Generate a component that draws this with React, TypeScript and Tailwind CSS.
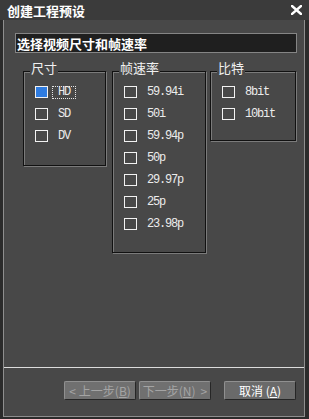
const cjk = "font-['Noto_Sans_CJK_SC','Noto_Sans',sans-serif]";
const mono = "font-['Liberation_Mono','Noto_Sans_CJK_SC',monospace]";

type Opt = { label: string; checked?: boolean; focus?: boolean };

const Check = ({ label, checked, focus }: Opt) => (
  <div className="flex items-center h-[12px]">
    <div
      className={`w-[13px] h-[12px] border border-[#f2f2f2] ${checked ? "bg-[#2f7ce0]" : ""}`}
    />
    <span
      className={`ml-[4px] px-[5px] h-[13px] flex items-center border border-dotted ${
        focus ? "border-[#e6e6e6]" : "border-transparent"
      } ${mono} text-[12px] tracking-[-1.2px] text-[#ececec]`}
    >
      {label}
    </span>
  </div>
);

const Group = ({
  title,
  width,
  height,
  items,
}: {
  title: string;
  width: string;
  height: string;
  items: Opt[];
}) => (
  <div
    className={`relative ${width} ${height} border border-[#111] shadow-[1px_1px_0_#7b7b7b,inset_1px_1px_0_#7b7b7b] pl-[11px] pt-[14px] flex flex-col gap-[10px]`}
  >
    <span
      className={`absolute left-[6px] -top-[12px] px-[1px] bg-[#484848] ${cjk} text-[13px] leading-[16px] text-[#f0f0f0]`}
    >
      {title}
    </span>
    {items.map((it) => (
      <Check key={it.label} {...it} />
    ))}
  </div>
);

const Btn = ({
  children,
  disabled,
  className = "",
}: {
  children: React.ReactNode;
  disabled?: boolean;
  className?: string;
}) => (
  <button
    className={`w-[72px] h-[19px] flex items-center justify-center rounded-[2px] border border-t-[#909090] border-l-[#909090] border-r-[#262626] border-b-[#262626] ${cjk} text-[12px] leading-none ${
      disabled ? "bg-[#707070] text-[#a4a4a4]" : "bg-[#6a6a6a] text-white"
    } ${className}`}
  >
    {children}
  </button>
);

export default function App() {
  return (
    <div className={`w-[309px] h-[419px] bg-[#2b2b2b] flex flex-col ${cjk}`}>
      <div className="h-[20px] shrink-0 bg-[#3b3b3b] flex items-center justify-between pl-[7px] pr-[7px]">
        <span className="text-[13px] font-bold leading-none text-white">创建工程预设</span>
        <svg width="11" height="10" viewBox="0 0 11 10">
          <path d="M1 1 L10 9 M10 1 L1 9" stroke="#fff" strokeWidth="2.4" strokeLinecap="square" />
        </svg>
      </div>

      <div className="flex-1 ml-[3px] mb-[2px] w-[302px] bg-[#484848] border-l border-r border-b border-[#8e8e8e] flex flex-col">
        <div className="ml-[11px] mt-[13px] w-[282px] h-[20px] border border-[#858585] bg-[#1f1f1f] flex items-center pl-[1px]">
          <span className="text-[13px] font-bold leading-none text-white">选择视频尺寸和帧速率</span>
        </div>

        <div className="flex items-start ml-[19px] mt-[18px]">
          <Group
            title="尺寸"
            width="w-[83px]"
            height="h-[95px]"
            items={[{ label: "HD", checked: true, focus: true }, { label: "SD" }, { label: "DV" }]}
          />
          <div className="ml-[6px]">
            <Group
              title="帧速率"
              width="w-[94px]"
              height="h-[182px]"
              items={[
                { label: "59.94i" },
                { label: "50i" },
                { label: "59.94p" },
                { label: "50p" },
                { label: "29.97p" },
                { label: "25p" },
                { label: "23.98p" },
              ]}
            />
          </div>
          <div className="ml-[4px]">
            <Group
              title="比特"
              width="w-[86px]"
              height="h-[70px]"
              items={[{ label: "8bit" }, { label: "10bit" }]}
            />
          </div>
        </div>

        <div className="flex-1" />
        <div className="h-px bg-[#dcdcdc]" />
        <div className="flex justify-end items-center pr-[8px] mt-[13px] mb-[16px]">
          <Btn disabled>
            <span className="mr-[3px]">&lt;</span>上一步(<span className="underline">B</span>)
          </Btn>
          <Btn disabled className="ml-[3px]">
            下一步(<span className="underline">N</span>)<span className="ml-[5px]">&gt;</span>
          </Btn>
          <Btn className="ml-[13px]">
            取消 (<span className="underline">A</span>)
          </Btn>
        </div>
      </div>
    </div>
  );
}
